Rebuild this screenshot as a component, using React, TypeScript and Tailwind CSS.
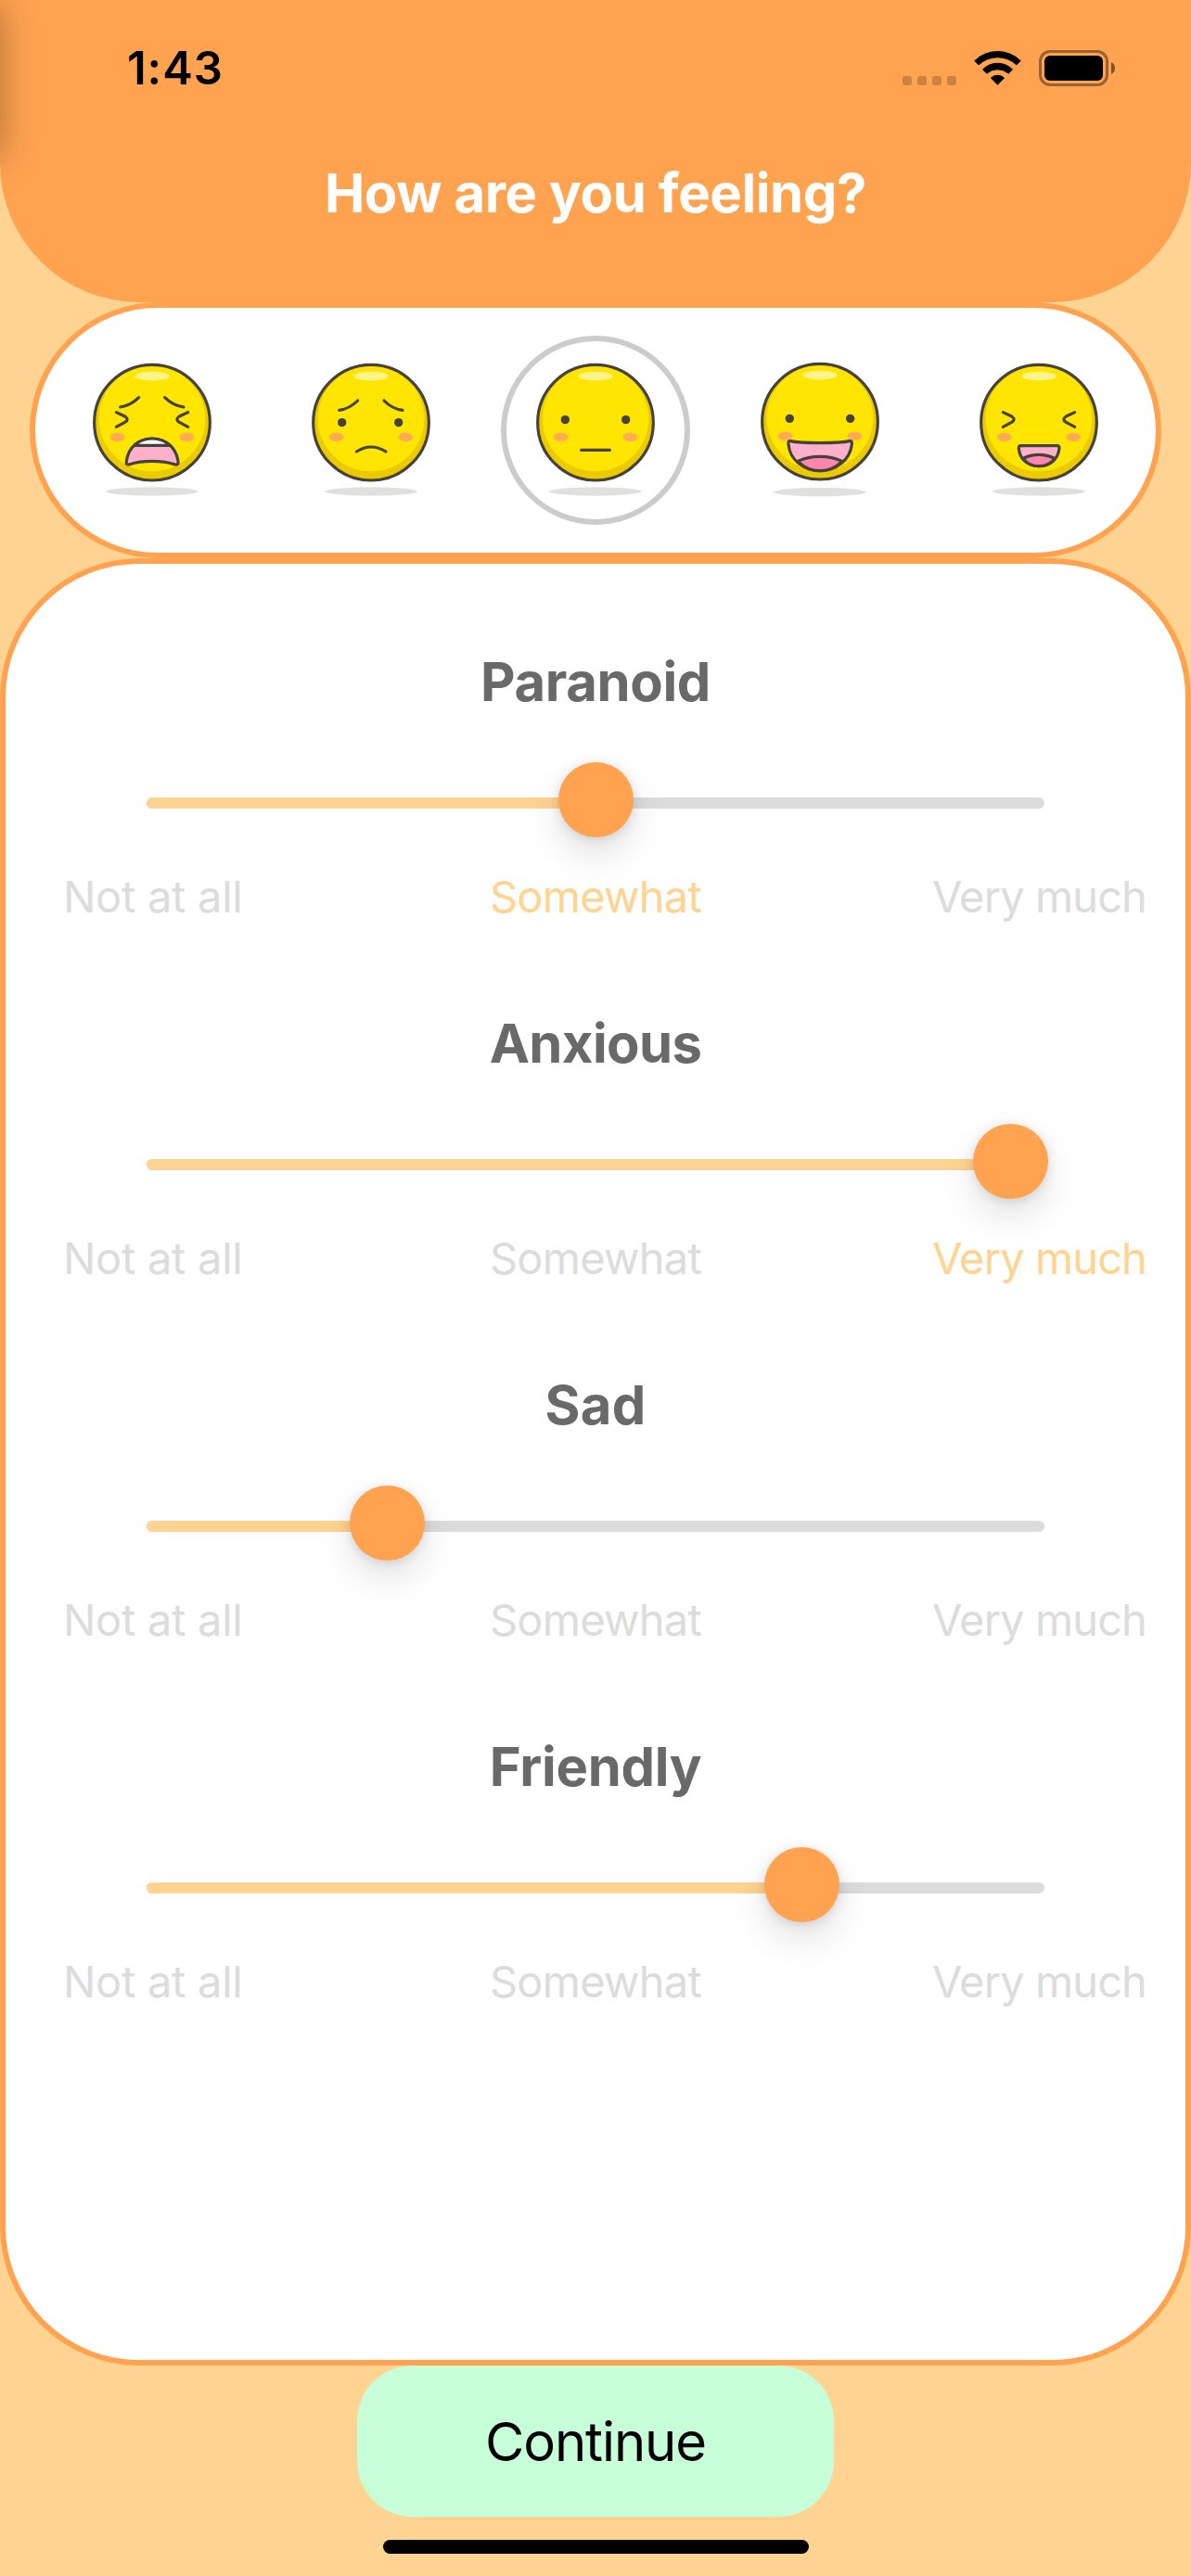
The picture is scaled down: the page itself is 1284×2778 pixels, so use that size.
import type { ReactNode } from "react";

const INK = "#45413c";

type FaceProps = { lift?: number; drop?: number; children: ReactNode };

function Face({ lift = -25, drop = 223, children }: FaceProps) {
  return (
    <svg viewBox="-288 -288 576 576" className="size-[192px] shrink-0">
      <g transform={`translate(0 ${lift})`}>
        <ellipse cx="0" cy={drop} rx="149" ry="14" fill="#e0e0de" />
        <circle r="187" fill="#ebcb00" />
        <ellipse cx="0" cy="-12" rx="172" ry="170" fill="#ffe500" />
        <ellipse cx="0" cy="-150" rx="56" ry="14.5" fill="#fff48c" />
        <circle r="187" fill="none" stroke={INK} strokeWidth="9.5" />
        <ellipse cx="-112" cy="47" rx="23.5" ry="14" fill="#ffaa54" />
        <ellipse cx="112" cy="47" rx="23.5" ry="14" fill="#ffaa54" />
        <g fill="none" stroke={INK} strokeWidth="9.5" strokeLinecap="round" strokeLinejoin="round">
          {children}
        </g>
      </g>
    </svg>
  );
}

function SquintEyes() {
  return (
    <>
      <path d="M-116 -33 L-88 -20 Q-73 -10 -88 -1 L-116 14" />
      <path d="M116 -33 L88 -20 Q73 -10 88 -1 L116 14" />
    </>
  );
}

function DotEyes({ left, right, y }: { left: number; right: number; y: number }) {
  return (
    <>
      <circle cx={left} cy={y} r="14" fill={INK} stroke="none" />
      <circle cx={right} cy={y} r="14" fill={INK} stroke="none" />
    </>
  );
}

function MoodPicker() {
  return (
    <div className="mx-[32px] flex h-[276px] shrink-0 items-center justify-center gap-[44px] rounded-[138px] border-[6px] border-[#ffa351] bg-white">
      <Face>
        <path d="M-103 -50 Q-70 -54 -43 -81" />
        <path d="M41 -81 Q68 -54 102 -50" />
        <SquintEyes />
        <path
          d="M-83 124 C-76 78 -42 52 0 52 C42 52 76 78 84 124 C86 134 81 138 72 135 C50 128 25 125 0 125 C-25 125 -50 128 -73 135 C-81 138 -85 134 -83 124Z"
          fill="#ffb0ca"
        />
        <path d="M-58 74 C-42 59 -22 52 0 52 C22 52 42 59 58 74Z" fill="#ffffff" />
      </Face>
      <Face>
        <path d="M-103 -40 Q-70 -44 -43 -71" />
        <path d="M42 -71 Q68 -44 102 -40" />
        <DotEyes left={-94} right={89} y={0} />
        <path d="M-47 94 Q0 64 48 94" />
      </Face>
      <div className="flex size-[204px] shrink-0 items-center justify-center rounded-full border-[6px] border-[#cccccc]">
        <Face>
          <DotEyes left={-98} right={98} y={-9} />
          <path d="M-46 89 H46" />
        </Face>
      </div>
      <Face lift={-28} drop={228}>
        <DotEyes left={-98} right={98} y={-10} />
        <path
          d="M-96 63 C-60 71 60 71 96 63 C102 62 104 66 103 73 C98 125 50 159 0 159 C-50 159 -98 125 -102 73 C-103 66 -102 62 -96 63Z"
          fill="#ffb0ca"
        />
        <path d="M-72 128 C-30 108 30 108 72 128 C50 150 25 159 0 159 C-25 159 -50 150 -72 128Z" fill="#ff87af" />
      </Face>
      <Face>
        <SquintEyes />
        <path
          d="M-58 75 H58 Q67 75 66 84 C62 120 35 141 0 141 C-35 141 -62 120 -65 84 Q-66 75 -58 75Z"
          fill="#ffb0ca"
        />
        <path d="M-51 116 C-20 100 20 100 51 116 C38 134 20 141 0 141 C-20 141 -38 134 -51 116Z" fill="#ff87af" />
      </Face>
    </div>
  );
}

function StatusBar() {
  return (
    <div className="flex h-[146px] items-center pr-[82px] pl-[137px]">
      <span className="mt-[2px] text-[49px] leading-[60px] font-semibold tracking-[0.9px] text-black">1:43</span>
      <div className="ml-auto flex items-center gap-[19px]">
        <div className="mt-[27px] flex gap-[6px]">
          <i className="size-[10px] rounded-[3px] bg-black/20" />
          <i className="size-[10px] rounded-[3px] bg-black/20" />
          <i className="size-[10px] rounded-[3px] bg-black/20" />
          <i className="size-[10px] rounded-[3px] bg-black/20" />
        </div>
        <svg viewBox="0 0 51 37" className="h-[37px] w-[51px]" strokeLinejoin="round">
          <g fill="#000" stroke="#000" strokeWidth="1">
            <path d="M0.8 10.6 A35.2 35.2 0 0 1 50.2 10.6 L45.9 14.9 A29.6 29.6 0 0 0 5.1 14.9Z" />
            <path d="M9.5 19.9 A22.5 22.5 0 0 1 41.5 19.9 L37.2 24.2 A17.8 17.8 0 0 0 13.8 24.2Z" />
            <path d="M18.4 29.1 A10.2 10.2 0 0 1 32.6 29.1 L25.5 36.2Z" />
          </g>
        </svg>
        <div className="flex items-center gap-[3px]">
          <div className="h-[39px] w-[75px] rounded-[12px] border-[3px] border-black/40 p-[3px]">
            <div className="size-full rounded-[6px] bg-black" />
          </div>
          <svg viewBox="0 0 4 13" className="h-[13px] w-[4px]">
            <path d="M0 0 Q4 2 4 6.5 Q4 11 0 13Z" fill="#000" fillOpacity="0.5" />
          </svg>
        </div>
      </div>
    </div>
  );
}

type Feeling = { name: string; thumb: number; picked?: number; tracking: string };

const FEELINGS: Feeling[] = [
  { name: "Paranoid", thumb: 444, picked: 1, tracking: "tracking-[-0.4px]" },
  { name: "Anxious", thumb: 891, picked: 2, tracking: "tracking-[-0.6px]" },
  { name: "Sad", thumb: 219, tracking: "tracking-[0.3px]" },
  { name: "Friendly", thumb: 666, tracking: "tracking-[-0.3px]" },
];

function FeelingSlider({ name, thumb, picked, tracking }: Feeling) {
  const tone = (i: number) => (i === picked ? "text-[#ffd391]" : "text-[#dcdcdc]");
  return (
    <section className="flex flex-col">
      <h2 className={`text-center text-[58px] leading-[72px] font-bold text-[#696969] ${tracking}`}>{name}</h2>
      <div className="relative mx-auto mt-[51px] h-[81px] w-[968px] pt-[38px]">
        <div className="h-[12px] overflow-hidden rounded-[6px] bg-[#dcdcdc]">
          <div className="h-full bg-[#ffd391]" style={{ width: thumb + 40 }} />
        </div>
        <div
          className="absolute top-0 size-[81px] rounded-full bg-[#ffa351] shadow-[0_1.5px_12px_rgba(0,0,0,0.12),0_18px_39px_rgba(0,0,0,0.12)]"
          style={{ left: thumb }}
        />
      </div>
      <div className="mt-[34px] grid grid-cols-[1fr_auto_1fr] px-[42px] text-[47px] leading-[60px]">
        <span className={`pl-[20px] tracking-[-0.3px] ${tone(0)}`}>Not at all</span>
        <span className={`tracking-[-0.75px] ${tone(1)}`}>Somewhat</span>
        <span className={`text-right tracking-[-0.9px] ${tone(2)}`}>Very much</span>
      </div>
    </section>
  );
}

export default function App() {
  return (
    <main className="relative flex h-[2778px] w-[1284px] flex-col overflow-hidden bg-[#ffd391] font-[Inter,sans-serif]">
      <header className="h-[326px] shrink-0 rounded-b-[150px] bg-[#ffa351]">
        <StatusBar />
        <h1 className="mt-[26px] text-center text-[58px] leading-[72px] font-bold tracking-[-0.4px] text-white">
          How are you feeling?
        </h1>
      </header>
      <div className="absolute top-[6px] -left-[100px] h-[164px] w-[100px] shadow-[0_0_40px_rgba(0,0,0,0.32)]" />
      <MoodPicker />
      <div className="flex h-[1949px] shrink-0 flex-col gap-[92px] rounded-[150px] border-[6px] border-[#ffa351] bg-white pt-[91px]">
        {FEELINGS.map((f) => (
          <FeelingSlider key={f.name} {...f} />
        ))}
      </div>
      <button className="mx-auto h-[163px] w-[514px] shrink-0 rounded-[60px] bg-[#c7ffd8] text-[58px] leading-[72px] tracking-[-1.1px] text-black">
        Continue
      </button>
      <div className="mx-auto mt-[25px] h-[15px] w-[459px] shrink-0 rounded-full bg-black" />
    </main>
  );
}
